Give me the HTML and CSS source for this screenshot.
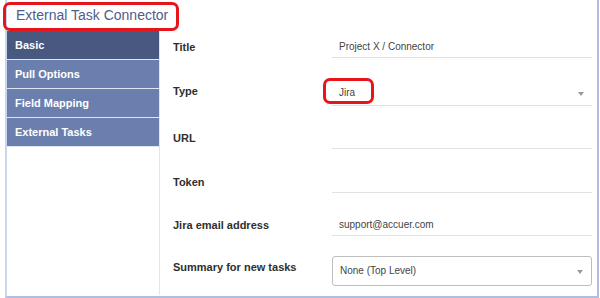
FILE: index.html
```html
<!DOCTYPE html>
<html lang="en">
<head>
<meta charset="UTF-8">
<title>External Task Connector</title>
<link rel="stylesheet" href="styles.css">
</head>
<body>

<div class="frame">
<div class="top-bar">
<h1>External Task Connector</h1>
<span class="mark mark-title"></span>
</div>

<div class="main">
<ul class="tabs">
<li class="active">Basic</li>
<li>Pull Options</li>
<li>Field Mapping</li>
<li>External Tasks</li>
</ul>

<div class="form">
<div class="row">
<label>Title</label>
<div class="field">Project X / Connector</div>
</div>
<div class="row row-type">
<label>Type</label>
<div class="field select">Jira<span class="caret"></span><span class="mark mark-type"></span></div>
</div>
<div class="row">
<label>URL</label>
<div class="field"></div>
</div>
<div class="row row-short">
<label>Token</label>
<div class="field"></div>
</div>
<div class="row row-tight">
<label>Jira email address</label>
<div class="field">support@accuer.com</div>
</div>
<div class="row">
<label>Summary for new tasks</label>
<div class="field boxed">None (Top Level)<span class="caret"></span></div>
</div>
</div>
</div>
</div>

</body>
</html>
```

FILE: styles.css
```css
/* Reset */
* {
margin: 0;
padding: 0;
box-sizing: border-box;
font-family: "Liberation Sans", Arial, sans-serif;
}

body {
background-color: #ffffff;
color: #333;
width: 600px;
height: 298px;
overflow: hidden;
}

/* Outer panel */
.frame {
margin-left: 5px;
width: 594px;
height: 298px;
border-left: 2px solid #c9d6ee;
border-right: 2px solid #aebfe3;
border-bottom: 2px solid #aebfe3;
}

.top-bar {
position: relative;
height: 29px;
padding-left: 9px;
}

.top-bar h1 {
font-size: 14px;
font-weight: normal;
line-height: 31px;
color: #4d5d8c;
}

/* red highlight rings */
.mark {
position: absolute;
border: 3px solid #e8141c;
border-radius: 7px;
}

.mark-title {
left: -4px;
top: 2px;
width: 176px;
height: 29px;
}

.mark-type {
left: -9px;
top: -3px;
width: 51px;
height: 26px;
}

.main {
display: flex;
height: 266px;
}

/* Left tabs */
.tabs {
list-style: none;
width: 154px;
border-right: 1px solid #e4e4e4;
padding-top: 2px;
}

.tabs li {
height: 29px;
line-height: 28px;
padding-left: 8px;
font-size: 11px;
font-weight: bold;
color: #ffffff;
background-color: #6b7fae;
border-bottom: 1px solid #dfe5f1;
}

.tabs li.active {
background-color: #48587f;
}

/* Form */
.form {
flex: 1;
padding: 2px 5px 0 13px;
}

.row {
display: flex;
align-items: flex-start;
height: 44px;
padding-top: 6px;
}

.row-type {
height: 47px;
}

.row-short {
height: 43px;
}

.row-tight {
height: 42px;
}

.row label {
width: 159px;
font-size: 11px;
font-weight: bold;
line-height: 20px;
color: #2f2f2f;
}

.field {
position: relative;
width: 260px;
height: 21px;
padding-left: 7px;
font-size: 10px;
line-height: 20px;
color: #444;
border-bottom: 1px solid #e2e2e2;
}

.field.select {
height: 25px;
line-height: 24px;
}

.field.boxed {
margin-top: -1px;
height: 30px;
line-height: 28px;
border: 1px solid #bdbdbd;
border-radius: 3px;
}

.caret {
position: absolute;
right: 8px;
top: 11px;
border-left: 3px solid transparent;
border-right: 3px solid transparent;
border-top: 4px solid #999;
}

.field.boxed .caret {
top: 13px;
}
```
